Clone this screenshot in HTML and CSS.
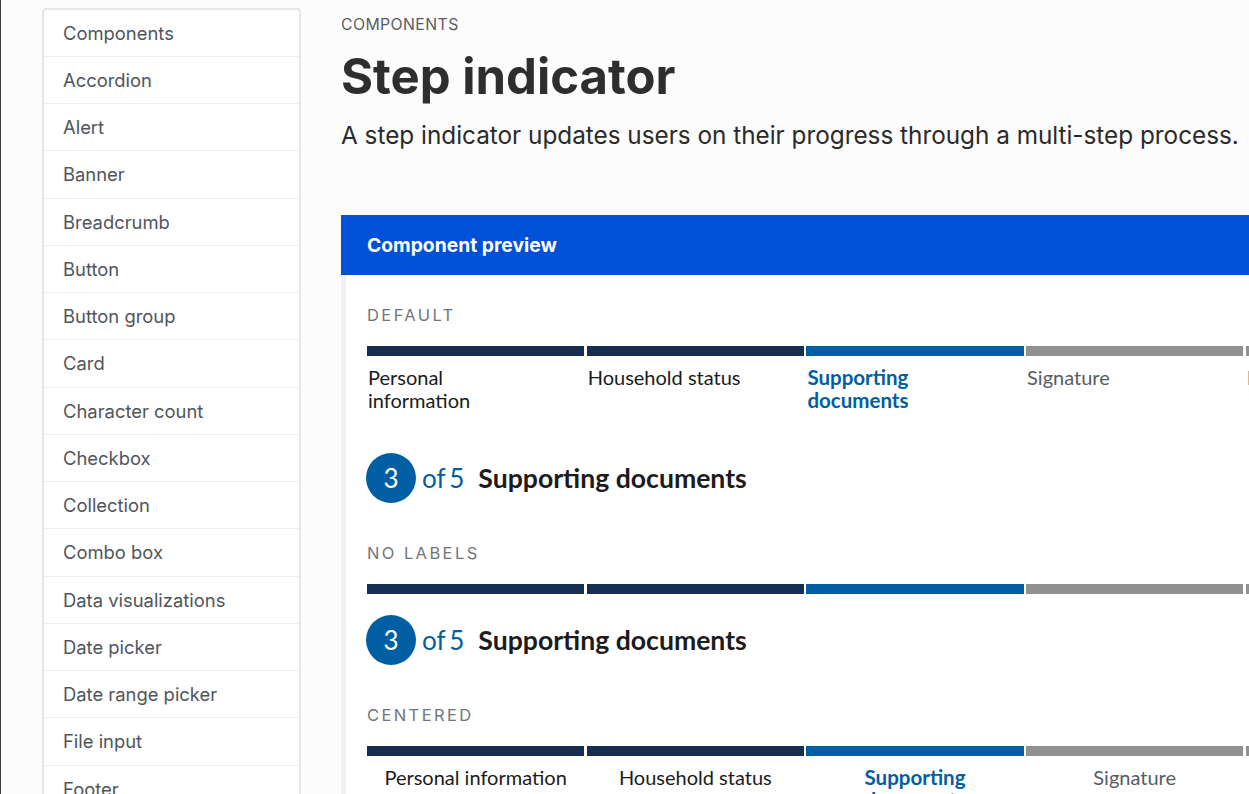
FILE: index.html
```html
<!DOCTYPE html>
<html lang="en">
<head>
<meta charset="utf-8">
<title>Step indicator</title>
<link rel="stylesheet" href="styles.css">
</head>
<body>
<div class="page">
  <nav class="sidenav">
    <ul class="sidenav-list">
      <li class="sidenav-item">Components</li>
      <li class="sidenav-item">Accordion</li>
      <li class="sidenav-item">Alert</li>
      <li class="sidenav-item">Banner</li>
      <li class="sidenav-item">Breadcrumb</li>
      <li class="sidenav-item">Button</li>
      <li class="sidenav-item">Button group</li>
      <li class="sidenav-item">Card</li>
      <li class="sidenav-item">Character count</li>
      <li class="sidenav-item">Checkbox</li>
      <li class="sidenav-item">Collection</li>
      <li class="sidenav-item">Combo box</li>
      <li class="sidenav-item">Data visualizations</li>
      <li class="sidenav-item">Date picker</li>
      <li class="sidenav-item">Date range picker</li>
      <li class="sidenav-item">File input</li>
      <li class="sidenav-item">Footer</li>
      <li class="sidenav-item">Form</li>
    </ul>
  </nav>
  <main class="main">
    <p class="eyebrow">Components</p>
    <h1 class="title">Step indicator</h1>
    <p class="lead">A step indicator updates users on their progress through a multi-step process.</p>
    <section class="preview">
      <div class="preview-header">Component preview</div>
      <div class="preview-body">
        <h2 class="example-heading">Default</h2>
        <ol class="segments labeled">
          <li class="segment complete"><span class="seg-label">Personal information</span></li>
          <li class="segment complete"><span class="seg-label">Household status</span></li>
          <li class="segment current"><span class="seg-label">Supporting documents</span></li>
          <li class="segment"><span class="seg-label">Signature</span></li>
          <li class="segment"><span class="seg-label">Review and submit</span></li>
        </ol>
        <div class="step-header">
          <span class="counter">3</span>
          <span class="total">of 5</span>
          <span class="step-title">Supporting documents</span>
        </div>

        <h2 class="example-heading">No labels</h2>
        <ol class="segments">
          <li class="segment complete"></li>
          <li class="segment complete"></li>
          <li class="segment current"></li>
          <li class="segment"></li>
          <li class="segment"></li>
        </ol>
        <div class="step-header">
          <span class="counter">3</span>
          <span class="total">of 5</span>
          <span class="step-title">Supporting documents</span>
        </div>

        <h2 class="example-heading">Centered</h2>
        <ol class="segments labeled centered">
          <li class="segment complete"><span class="seg-label">Personal information</span></li>
          <li class="segment complete"><span class="seg-label">Household status</span></li>
          <li class="segment current"><span class="seg-label">Supporting documents</span></li>
          <li class="segment"><span class="seg-label">Signature</span></li>
          <li class="segment"><span class="seg-label">Review and submit</span></li>
        </ol>
      </div>
    </section>
  </main>
</div>
</body>
</html>
```

FILE: styles.css
```css
html, body {
  margin: 0;
  height: 100%;
  overflow: hidden;
}

body {
  background: #fcfcfc;
  border-left: 1px solid #3d3d3d;
  font-family: Inter, "Liberation Sans", sans-serif;
  color: #1b1b1b;
}

.page {
  display: flex;
  align-items: flex-start;
}

/* Side navigation */
.sidenav {
  flex: 0 0 auto;
  width: 255px;
  margin: 7.5px 0 0 40.5px;
  border: 2px solid #e6e6e6;
  border-radius: 4px;
  background: #fff;
}

.sidenav-list {
  list-style: none;
  margin: 0;
  padding: 0;
}

.sidenav-item {
  padding: 12px 19.5px;
  line-height: 22.25px;
  font-size: 18.4px;
  color: #50555c;
  border-top: 1px solid #f0f0f0;
}

.sidenav-item:first-child {
  border-top: 0;
}

/* Main column */
.main {
  flex: 0 0 1150px;
  margin-left: 40.5px;
}

.eyebrow {
  margin: 15px 0 0;
  line-height: 20px;
  font-size: 15.8px;
  letter-spacing: 0.4px;
  text-transform: uppercase;
  color: #5c5c5c;
}

.title {
  margin: 11.5px 0 0;
  line-height: 60px;
  font-size: 49px;
  font-weight: 700;
  color: #2e2e2e;
}

.lead {
  margin: 12.5px 0 0;
  line-height: 32px;
  font-size: 24.3px;
  color: #2a2a2a;
}

/* Preview box */
.preview {
  margin-top: 64px;
  background: #fff;
}

.preview-header {
  height: 60px;
  padding-left: 26px;
  display: flex;
  align-items: center;
  background: #0050d8;
  color: #fff;
  font-size: 19.3px;
  font-weight: 700;
}

.preview-body {
  border-left: 5px solid #f0f0f0;
  padding: 28px 21px 40px;
  font-family: Lato, "Liberation Sans", sans-serif;
}

.example-heading {
  margin: 38px 0 0;
  line-height: 24px;
  font-family: Inter, "Liberation Sans", sans-serif;
  font-size: 16.5px;
  font-weight: 400;
  letter-spacing: 2.4px;
  text-transform: uppercase;
  color: #71767a;
}

.example-heading:first-child {
  margin-top: 0;
}

/* Step indicator segments */
.segments {
  list-style: none;
  margin: 19px 0 0;
  padding: 0;
  width: 1096px;
  display: flex;
  gap: 2.5px;
}

.segment {
  flex: 1 1 0;
  min-width: 0;
}

.segment::before {
  content: "";
  display: block;
  height: 10px;
  background: #919191;
}

.segment.complete::before {
  background: #162e51;
}

.segment.current::before {
  background: #005ea2;
}

.seg-label {
  display: block;
  padding: 10px 40px 0 1px;
  line-height: 23px;
  font-size: 20px;
  color: #565c65;
}

.segment.complete .seg-label {
  color: #1b1b1b;
}

.segment.current .seg-label {
  color: #005ea2;
  font-weight: 700;
  font-size: 20.5px;
}

.labeled .seg-label {
  padding-bottom: 20px;
}

.centered .seg-label {
  padding-left: 10px;
  padding-right: 10px;
  text-align: center;
}

/* Step header */
.step-header {
  margin-top: 21px;
  display: flex;
  align-items: center;
  height: 50px;
}

.counter {
  width: 50px;
  height: 50px;
  margin-left: -1px;
  border-radius: 50%;
  background: #005ea2;
  color: #fff;
  display: flex;
  align-items: center;
  justify-content: center;
  font-size: 26px;
}

.total {
  margin-left: 6px;
  font-size: 26px;
  word-spacing: -2.5px;
  color: #005ea2;
}

.step-title {
  margin-left: 14px;
  font-size: 26.6px;
  font-weight: 700;
  color: #1b1b1b;
}
```
